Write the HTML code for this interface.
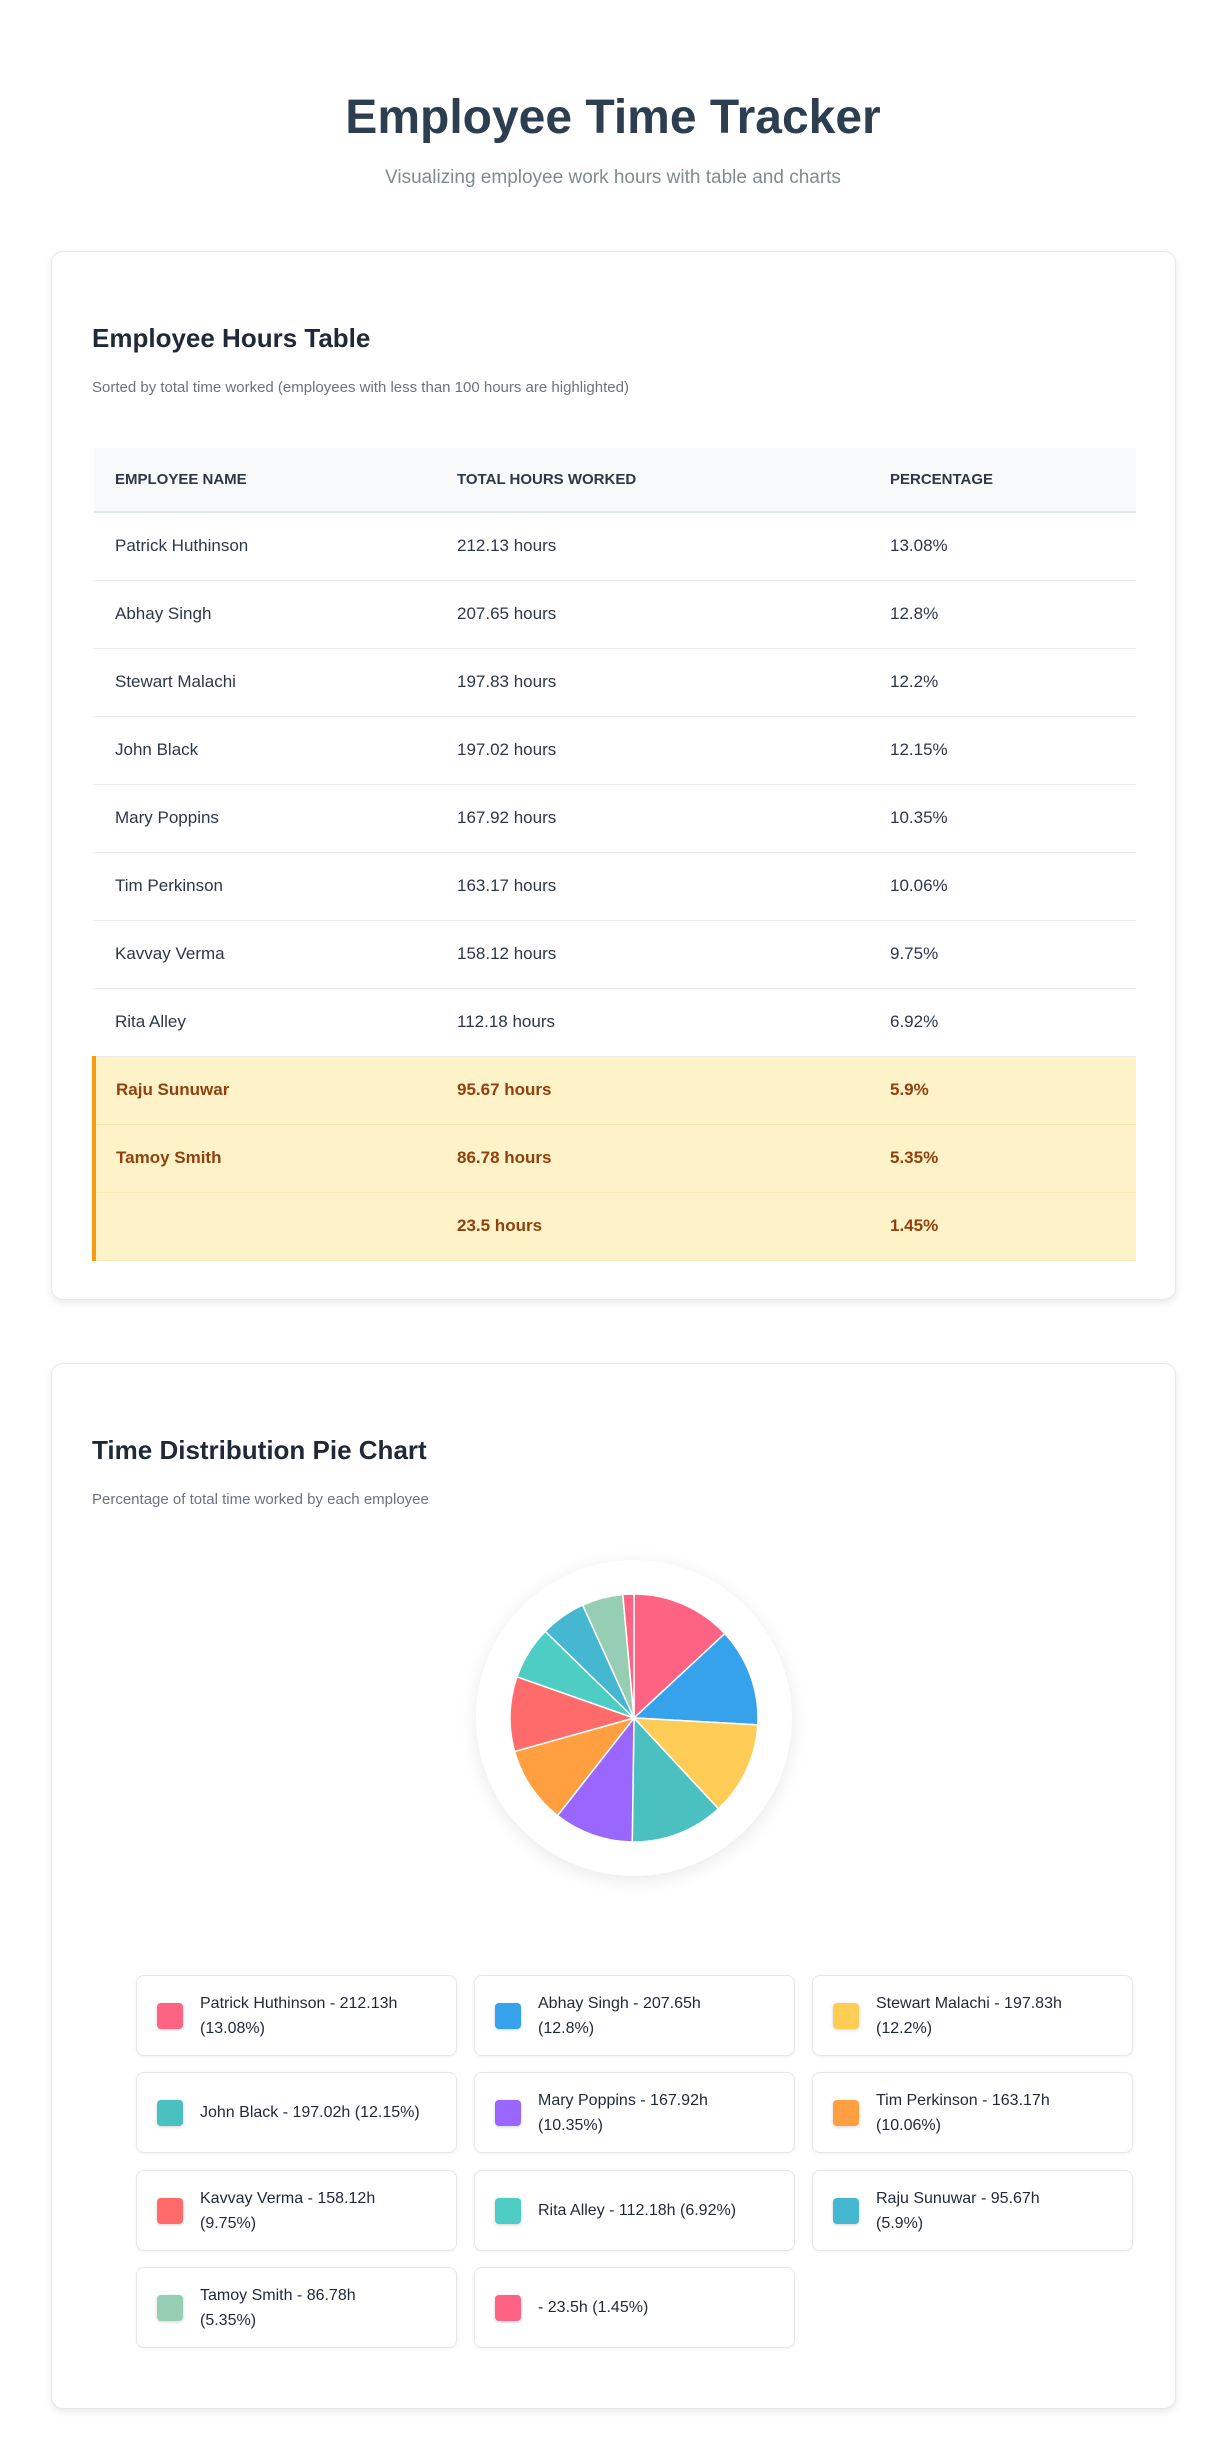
<!DOCTYPE html>
<html><head><meta charset="utf-8"><style>
*{box-sizing:border-box;margin:0;padding:0}
body{width:1208px;height:2460px;background:#fff;font-family:"Liberation Sans",sans-serif;position:relative;color:#2d3748}
.abs{position:absolute}
h1{position:absolute;left:0;width:1226px;top:88px;text-align:center;font-size:48px;font-weight:bold;color:#2c3e50;line-height:60px}
.sub{position:absolute;left:0;width:1226px;top:166px;text-align:center;font-size:19px;color:#7f8c8d;line-height:24px}
.card{position:absolute;left:51px;width:1125px;background:#fff;border:1px solid #e6e9ec;border-radius:12px;box-shadow:0 3px 8px rgba(0,0,0,.09)}
.card h2{position:absolute;left:40px;font-size:26px;font-weight:bold;color:#1f2937;line-height:32px}
.card .d{position:absolute;left:40px;font-size:15px;color:#6b7280;line-height:20px}
table{position:absolute;left:40px;top:196px;width:1044px;border-collapse:collapse;font-size:17px}
th{height:64px;background:#f8f9fa;border-bottom:2px solid #e2e8f0;text-align:left;font-size:15px;font-weight:600;color:#2d3748;padding-left:21px}
td{height:68px;border-bottom:1px solid #e9ecef;padding-left:21px;color:#2d3748}
tr.h td{background:#fdf2c8;color:#92400e;font-weight:bold;border-bottom:1px solid #f6e7b4}
tr.h td:first-child{border-left:4px solid #f59e0b;padding-left:20px}
.lg{position:absolute;width:321px;height:81px;border:1px solid #e5e7eb;border-radius:8px;box-shadow:0 1px 3px rgba(0,0,0,.06);background:#fff}
.lg i{position:absolute;left:20px;top:27px;width:26px;height:26px;border-radius:4px;box-shadow:0 1px 3px rgba(0,0,0,.18)}
.lg span{position:absolute;left:63px;top:0;height:79px;display:flex;align-items:center;font-size:16px;line-height:25px;color:#1f2937;white-space:nowrap}
</style></head><body>
<h1>Employee Time Tracker</h1>
<div class="sub">Visualizing employee work hours with table and charts</div>

<div class="card" style="top:251px;height:1049px">
<h2 style="top:70px">Employee Hours Table</h2>
<div class="d" style="top:126px">Sorted by total time worked (employees with less than 100 hours are highlighted)</div>
<table>
<tr><th style="width:342px">EMPLOYEE NAME</th><th style="width:433px">TOTAL HOURS WORKED</th><th>PERCENTAGE</th></tr>
<tr><td>Patrick Huthinson</td><td>212.13 hours</td><td>13.08%</td></tr>
<tr><td>Abhay Singh</td><td>207.65 hours</td><td>12.8%</td></tr>
<tr><td>Stewart Malachi</td><td>197.83 hours</td><td>12.2%</td></tr>
<tr><td>John Black</td><td>197.02 hours</td><td>12.15%</td></tr>
<tr><td>Mary Poppins</td><td>167.92 hours</td><td>10.35%</td></tr>
<tr><td>Tim Perkinson</td><td>163.17 hours</td><td>10.06%</td></tr>
<tr><td>Kavvay Verma</td><td>158.12 hours</td><td>9.75%</td></tr>
<tr><td>Rita Alley</td><td>112.18 hours</td><td>6.92%</td></tr>
<tr class="h"><td>Raju Sunuwar</td><td>95.67 hours</td><td>5.9%</td></tr>
<tr class="h"><td>Tamoy Smith</td><td>86.78 hours</td><td>5.35%</td></tr>
<tr class="h"><td></td><td>23.5 hours</td><td>1.45%</td></tr>
</table>
</div>

<div class="card" style="top:1363px;height:1046px">
<h2 style="top:70px">Time Distribution Pie Chart</h2>
<div class="d" style="top:126px">Percentage of total time worked by each employee</div>
<div class="abs" style="left:424px;top:196px;width:316px;height:316px;border-radius:50%;background:#fff;box-shadow:0 4px 18px rgba(0,0,0,.09)"></div>
<svg class="abs" style="left:457px;top:229px" width="250" height="250" viewBox="-125 -125 250 250">
<g stroke="#fff" stroke-width="1.5">
<path d="M0 0L0 -124A124 124 0 0 1 90.8 -84.4Z" fill="#ff6384"/>
<path d="M0 0L90.8 -84.4A124 124 0 0 1 123.8 6.85Z" fill="#36a2eb"/>
<path d="M0 0L123.8 6.85A124 124 0 0 1 84.4 90.8Z" fill="#ffcd56"/>
<path d="M0 0L84.4 90.8A124 124 0 0 1 -1.8 124Z" fill="#4bc0c0"/>
<path d="M0 0L-1.8 124A124 124 0 0 1 -76.5 97.6Z" fill="#9966ff"/>
<path d="M0 0L-76.5 97.6A124 124 0 0 1 -119.4 33.5Z" fill="#ff9f40"/>
<path d="M0 0L-119.4 33.5A124 124 0 0 1 -117 -41.2Z" fill="#ff6b6b"/>
<path d="M0 0L-117 -41.2A124 124 0 0 1 -88.7 -86.6Z" fill="#4ecdc4"/>
<path d="M0 0L-88.7 -86.6A124 124 0 0 1 -51.3 -112.9Z" fill="#45b7d1"/>
<path d="M0 0L-51.3 -112.9A124 124 0 0 1 -11.2 -123.5Z" fill="#96ceb4"/>
<path d="M0 0L-11.2 -123.5A124 124 0 0 1 0 -124Z" fill="#ff6384"/>
</g></svg>

<div class="lg" style="left:84px;top:611px"><i style="background:#ff6384"></i><span>Patrick Huthinson - 212.13h<br>(13.08%)</span></div>
<div class="lg" style="left:422px;top:611px"><i style="background:#36a2eb"></i><span>Abhay Singh - 207.65h<br>(12.8%)</span></div>
<div class="lg" style="left:760px;top:611px"><i style="background:#ffcd56"></i><span>Stewart Malachi - 197.83h<br>(12.2%)</span></div>
<div class="lg" style="left:84px;top:708px"><i style="background:#4bc0c0"></i><span>John Black - 197.02h (12.15%)</span></div>
<div class="lg" style="left:422px;top:708px"><i style="background:#9966ff"></i><span>Mary Poppins - 167.92h<br>(10.35%)</span></div>
<div class="lg" style="left:760px;top:708px"><i style="background:#ff9f40"></i><span>Tim Perkinson - 163.17h<br>(10.06%)</span></div>
<div class="lg" style="left:84px;top:806px"><i style="background:#ff6b6b"></i><span>Kavvay Verma - 158.12h<br>(9.75%)</span></div>
<div class="lg" style="left:422px;top:806px"><i style="background:#4ecdc4"></i><span>Rita Alley - 112.18h (6.92%)</span></div>
<div class="lg" style="left:760px;top:806px"><i style="background:#45b7d1"></i><span>Raju Sunuwar - 95.67h<br>(5.9%)</span></div>
<div class="lg" style="left:84px;top:903px"><i style="background:#96ceb4"></i><span>Tamoy Smith - 86.78h<br>(5.35%)</span></div>
<div class="lg" style="left:422px;top:903px"><i style="background:#ff6384"></i><span>- 23.5h (1.45%)</span></div>
</div>
</body></html>
